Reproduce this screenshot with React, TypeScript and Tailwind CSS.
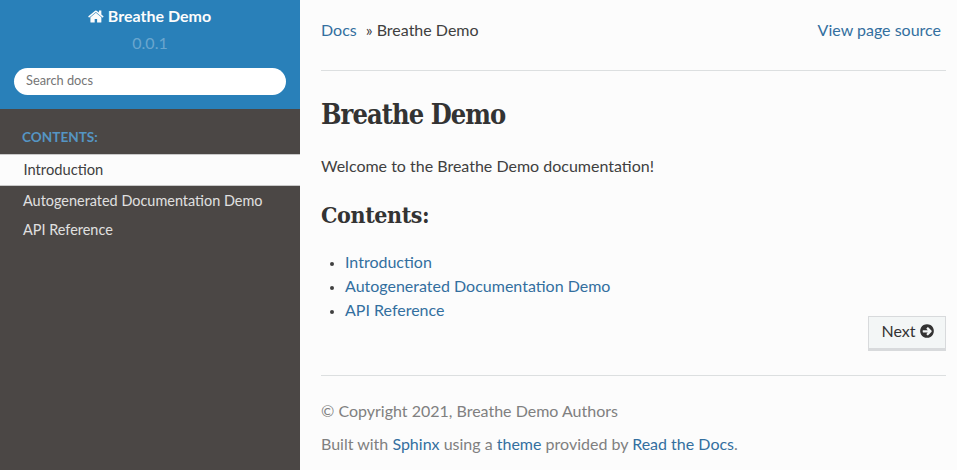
import React from "react";

const pages = ["Introduction", "Autogenerated Documentation Demo", "API Reference"];

function HomeIcon() {
  return (
    <svg viewBox="0 0 1792 1792" className="-ml-px mr-[3px] size-[17px] shrink-0 fill-current" aria-hidden="true">
      <path d="M1408 992v480q0 26-19 45t-45 19h-384v-384h-256v384h-384q-26 0-45-19t-19-45v-480q0-1 .5-3t.5-3l575-474 575 474q1 2 1 6zm223-69l-62 74q-8 9-21 11h-3q-13 0-21-7l-692-577-692 577q-12 8-24 7-13-2-21-11l-62-74q-8-10-7-23.5t11-21.5l719-599q32-26 76-26t76 26l244 204v-195q0-14 9-23t23-9h192q14 0 23 9t9 23v408l219 182q10 8 11 21.5t-7 23.5z" />
    </svg>
  );
}

function ArrowCircleIcon() {
  return (
    <svg viewBox="0 0 1792 1792" className="ml-[3px] size-4 shrink-0 fill-current" aria-hidden="true">
      <path d="M1413 896q0-27-18-45l-91-91-272-272q-18-18-45-18t-45 18l-91 91q-18 18-18 45t18 45l133 133h-502q-26 0-45 19t-19 45v128q0 26 19 45t45 19h502l-133 133q-18 18-18 45t18 45l91 91q18 18 45 18t45-18l272-272 91-91q18-18 18-45zm251 0q0 209-103 385.5t-279.5 279.5-385.5 103-385.5-103-279.5-279.5-103-385.5 103-385.5 279.5-279.5 385.5-103 385.5 103 279.5 279.5 103 385.5z" />
    </svg>
  );
}

function Sidebar() {
  return (
    <nav className="w-[300px] shrink-0 bg-[#4b4745]">
      <div className="flex h-[109px] flex-col items-center bg-[#2980b9]">
        <a href="#" className="mt-1 flex h-6 items-center font-bold text-[#fcfcfc]">
          <HomeIcon />
          Breathe Demo
        </a>
        <div className="mt-[3px] h-6 leading-6 text-[#69a6ce]">0.0.1</div>
        <input
          type="text"
          placeholder="Search docs"
          className="mt-[13px] h-[27px] w-[272px] rounded-full bg-white px-3 pb-[3px] text-[12.8px] outline-none placeholder:text-[#757575]"
        />
      </div>
      <p className="mt-3 h-8 pl-[22px] text-[13.6px] leading-8 font-bold text-[#5595c3]">CONTENTS:</p>
      <ul className="mt-px text-[14.45px] text-[#e0e0e0]">
        <li className="flex h-8 items-center border-y border-[#c9c9c9] bg-[#fcfcfc] pb-[3px] pl-[23.5px] text-[14.7px] text-[#404040]">
          <a href="#">{pages[0]}</a>
        </li>
        <li className="flex h-[29px] items-center pl-[23px]">
          <a href="#">{pages[1]}</a>
        </li>
        <li className="flex h-[29px] items-center pl-[23px]">
          <a href="#">{pages[2]}</a>
        </li>
      </ul>
    </nav>
  );
}

export default function App() {
  return (
    <div className="flex h-[470px] w-[957px] overflow-hidden bg-[#fcfcfc] font-['Lato',sans-serif] text-base leading-6 text-[#404040]">
      <Sidebar />
      <main className="flex min-w-0 flex-1 flex-col pt-[18px] pr-[11px] pl-[21px]">
        <div className="flex h-6 justify-between pr-[5px]">
          <div className="flex">
            <a href="#" className="text-[#336f9f]">Docs</a>
            <span className="ml-[9px]">» Breathe Demo</span>
          </div>
          <a href="#" className="text-[#336f9f]">View page source</a>
        </div>
        <hr className="mt-7 border-[#dcdfe0]" />
        <h1 className="mt-6 h-10 font-['Roboto_Slab','DejaVu_Serif_Condensed','DejaVu_Serif',serif] text-[27px] leading-10 font-bold tracking-[-0.95px] text-[#333]">
          Breathe Demo
        </h1>
        <p className="mt-[19px]">Welcome to the Breathe Demo documentation!</p>
        <h2 className="mt-[21px] h-8 font-['Roboto_Slab','DejaVu_Serif_Condensed','DejaVu_Serif',serif] text-[23px] leading-8 font-bold tracking-[-0.4px] text-[#333]">
          Contents:
        </h2>
        <ul className="mt-[19px] list-disc pl-6 marker:text-[12px]">
          {pages.map((page) => (
            <li key={page} className="h-6">
              <a href="#" className="text-[#336f9f]">{page}</a>
            </li>
          ))}
        </ul>
        <div className="-mt-1.5 flex justify-end">
          <a href="#" className="flex h-[35px] w-[78px] items-center border border-b-[3px] border-[#d8dadc] bg-[#f3f6f6] pb-1 pl-[12.5px] text-[#333]">
            Next
            <ArrowCircleIcon />
          </a>
        </div>
        <hr className="mt-6 border-[#dcdfe0]" />
        <footer className="mt-[23px] text-[#808080]">
          <p>© Copyright 2021, Breathe Demo Authors</p>
          <p className="mt-[9px]">
            Built with <a href="#" className="text-[#336f9f]">Sphinx</a> using a{" "}
            <a href="#" className="text-[#336f9f]">theme</a> provided by{" "}
            <a href="#" className="text-[#336f9f]">Read the Docs</a>.
          </p>
        </footer>
      </main>
    </div>
  );
}
